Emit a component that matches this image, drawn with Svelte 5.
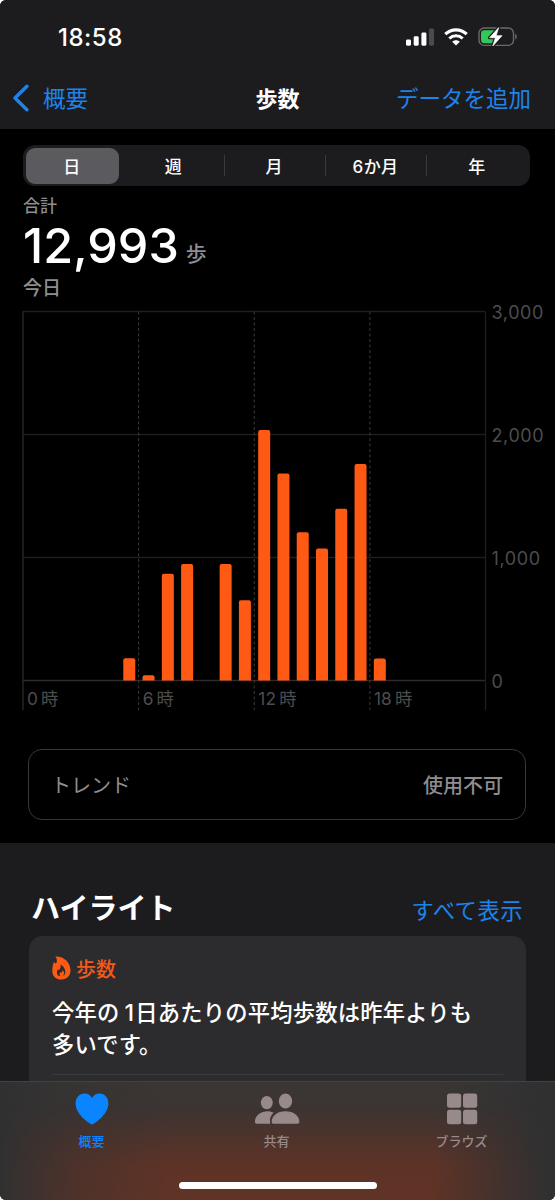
<script>
    const ranges = ['日', '週', '月', '6か月', '年'];
    let selected = $state('日');
    let activeTab = $state('概要');

    const steps = [
        { hour: 5, count: 180 },
        { hour: 6, count: 42 },
        { hour: 7, count: 868 },
        { hour: 8, count: 948 },
        { hour: 10, count: 948 },
        { hour: 11, count: 652 },
        { hour: 12, count: 2036 },
        { hour: 13, count: 1682 },
        { hour: 14, count: 1206 },
        { hour: 15, count: 1074 },
        { hour: 16, count: 1396 },
        { hour: 17, count: 1760 },
        { hour: 18, count: 178 }
    ];

    const left = 23;
    const right = 485.5;
    const top = 11.5;
    const bottom = 380.5;
    const barWidth = 12;
    const slot = (right - left) / 24;

    const x = (hour) => left + hour * slot;
    const y = (count) => bottom - (count / 3000) * (bottom - top);

    // 上だけ角丸の棒
    function bar({ hour, count }) {
        const x0 = x(hour) + (slot - barWidth) / 2 + 0.3;
        const y0 = y(count);
        const r = 2;
        return `M${x0} ${bottom}V${y0 + r}q0 ${-r} ${r} ${-r}h${barWidth - 2 * r}q${r} 0 ${r} ${r}V${bottom}z`;
    }
</script>

<div class="screen">
    <header>
        <div class="status">
            <span class="time">18:58</span>
            <div class="status-icons">
                <svg width="28" height="18" viewBox="0 0 28 18">
                    <rect x="0" y="11.5" width="5" height="6.2" rx="1.4" fill="#fff" />
                    <rect x="7.7" y="8.3" width="5" height="9.4" rx="1.4" fill="#fff" />
                    <rect x="15.4" y="4.4" width="5" height="13.3" rx="1.4" fill="#fff" />
                    <rect x="23" y="0.4" width="5" height="17.3" rx="1.4" fill="#4b4b4d" />
                </svg>
                <svg class="wifi" width="24" height="18" viewBox="0 0 24 18">
                    <path d="M1.3 6.2C7.4.4 16.6.4 22.7 6.2" fill="none" stroke="#fff" stroke-width="3.2" />
                    <path d="M5.3 10.5c3.8-3.6 9.6-3.6 13.4 0" fill="none" stroke="#fff" stroke-width="3" />
                    <path d="M8.2 13.8c2.2-2 5.4-2 7.6 0L12 17.6z" fill="#fff" />
                </svg>
                <svg class="battery" width="40" height="20" viewBox="0 0 40 20">
                    <rect x="1" y="1" width="34.5" height="17.4" rx="5.2" fill="none" stroke="#69696c" stroke-width="1.4" />
                    <path d="M37.2 6.8c2.2.9 2.2 5 0 5.8z" fill="#69696c" />
                    <path d="M6.4 3.2H18V16.2H6.4a3.4 3.4 0 0 1-3.4-3.4V6.6a3.4 3.4 0 0 1 3.4-3.4z" fill="#34c759" />
                    <path d="M20.7.6 11.6 10.7h5.8L14.8 19 24 8.7h-5.9z" fill="#fff" stroke="#1c1c1e" stroke-width="3.2" stroke-linejoin="round" />
                    <path d="M20.7.6 11.6 10.7h5.8L14.8 19 24 8.7h-5.9z" fill="#fff" stroke="#fff" stroke-width=".7" stroke-linejoin="round" />
                </svg>
            </div>
        </div>
        <nav class="navbar">
            <button class="back">
                <svg width="17" height="28" viewBox="0 0 17 28">
                    <path d="M14.9 2.2 3 14l11.9 11.8" fill="none" stroke="currentColor" stroke-width="3.4" stroke-linecap="round" stroke-linejoin="round" />
                </svg>
                <span>概要</span>
            </button>
            <h1>歩数</h1>
            <button class="add">データを追加</button>
        </nav>
    </header>

    <main>
        <div class="segments">
            {#each ranges as range}
                <button class:selected={selected === range} onclick={() => (selected = range)}>{range}</button>
            {/each}
        </div>

        <div class="summary">
            <div class="label">合計</div>
            <div class="total"><strong>12,993</strong><span>歩</span></div>
            <div class="date">今日</div>
        </div>

        <svg class="chart" width="555" height="420" viewBox="0 0 555 420">
            {#each [0, 1000, 2000, 3000] as tick}
                <line x1={left} x2={right} y1={y(tick)} y2={y(tick)} class:base={tick === 0} />
                <text x="491.5" y={y(tick) + 7} class="tick">{tick.toLocaleString('en-US')}</text>
            {/each}
            <line class="base" x1={left} x2={left} y1={top} y2="410" />
            <line x1={right} x2={right} y1={top} y2="410" />
            {#each [6, 12, 18] as hour}
                <line class="dashed" x1={x(hour)} x2={x(hour)} y1={top} y2="410" />
            {/each}
            {#each [0, 6, 12, 18] as hour}
                <text x={x(hour) + 4} y="405" class="hour">{hour}<tspan dx="3">時</tspan></text>
            {/each}
            {#each steps as step}
                <path d={bar(step)} fill="#ff5a14" />
            {/each}
        </svg>

        <div class="trend">
            <span>トレンド</span>
            <b>使用不可</b>
        </div>
    </main>

    <section>
        <div class="section-head">
            <h2>ハイライト</h2>
            <button>すべて表示</button>
        </div>
        <article>
            <div class="category">
                <svg width="19" height="24" viewBox="0 0 19 24">
                    <path fill-rule="evenodd" d="M3.3.4C12 0 18.6 6.4 18.5 14.5 18.4 20 14.8 23.5 9.5 23.5 4 23.5.3 20.2.3 15.2.3 12 .8 8.8 1.8 6.2c.9.3 1.5.8 1.9 1.6C5.6 5.6 5.3 2.8 3.3.4zM8.6 8.6c.5 2.8-.5 4.2-1.6 5.8-.4-.5-.7-.9-.9-1.5C4 16.2 4.700 20 8.400 20c-1.200-1.200-1-2.800 0-4.100l.9 1c.9-.9 1.200-1.700 1.100-2.800 2.300 1.900 2.300 4.300.4 5.900 4.200-1.300 3.300-8.300-2.200-11.400z" fill="#ff5a14" />
                </svg>
                <span>歩数</span>
            </div>
            <p>今年の<span class="num">1</span>日あたりの平均歩数は昨年よりも<br />多いです。</p>
            <hr />
        </article>
    </section>

    <footer>
        <div class="tabs">
            <button class:active={activeTab === '概要'} onclick={() => (activeTab = '概要')}>
                <svg width="34" height="32" viewBox="0 0 34 32">
                    <path d="M17 31.5C15.5 31.5.6 21.8.6 10.500.6 4.500 4.600.6 9.300.6c3.400 0 6.100 1.500 7.700 4.300C18.600 2.100 21.300.6 24.700.6c4.700 0 8.700 3.900 8.700 9.900C33.400 21.800 18.500 31.500 17 31.500z" fill="currentColor" />
                </svg>
                <span>概要</span>
            </button>
            <button class:active={activeTab === '共有'} onclick={() => (activeTab = '共有')}>
                <svg width="46" height="32" viewBox="0 0 46 32">
                    <ellipse cx="12.8" cy="9.6" rx="6" ry="6.6" fill="currentColor" />
                    <path d="M19.8 19.8C13 15.800 1.200 19.500.9 28.600c0 1.500.8 2.200 2 2.200h13.500C15.300 26.500 16.500 22.500 19.800 19.800z" fill="currentColor" />
                    <ellipse cx="31.5" cy="8" rx="6.7" ry="7.5" fill="currentColor" />
                    <path d="M31.500 18.200c-8.500 0-13.800 5-13.800 10.200 0 1.700.7 2.400 2.200 2.400h23.200c1.500 0 2.200-.7 2.200-2.400 0-5.200-5.300-10.200-13.800-10.200z" fill="currentColor" />
                </svg>
                <span>共有</span>
            </button>
            <button class:active={activeTab === 'ブラウズ'} onclick={() => (activeTab = 'ブラウズ')}>
                <svg width="32" height="32" viewBox="0 0 32 32">
                    <rect x="1" y="0.4" width="14.2" height="14.4" rx="2.5" fill="currentColor" />
                    <rect x="17" y="0.4" width="14.2" height="14.4" rx="2.5" fill="currentColor" />
                    <rect x="1" y="16.8" width="14.2" height="14.4" rx="2.5" fill="currentColor" />
                    <rect x="17" y="16.8" width="14.2" height="14.4" rx="2.5" fill="currentColor" />
                </svg>
                <span>ブラウズ</span>
            </button>
        </div>
        <div class="home-bar"></div>
    </footer>
</div>

<style>
    :global(body) {
        background: #fff;
    }

    .screen {
        position: relative;
        width: 555px;
        height: 1200px;
        overflow: hidden;
        border-radius: 6px;
        background: #1c1c1e;
        color: #fff;
        font-family: Inter, 'Noto Sans CJK JP', sans-serif;
    }

    button {
        padding: 0;
        border: 0;
        background: none;
        color: #1d84ec;
        font: inherit;
    }

    header {
        height: 129px;
        background: #1c1c1e;
    }

    .status {
        display: flex;
        justify-content: space-between;
        align-items: center;
        height: 74px;
        padding: 0 37px 0 58px;
    }

    .time {
        font-size: 24px;
        font-weight: 550;
        letter-spacing: 0.5px;
    }

    .status-icons {
        display: flex;
        align-items: center;
    }

    .wifi,
    .battery {
        margin-left: 10px;
    }

    .navbar {
        display: grid;
        grid-template-columns: 1fr auto 1fr;
        align-items: center;
        height: 48px;
        padding: 0 24px 0 12px;
        font-size: 22.5px;
    }

    .navbar span,
    .navbar h1,
    .add {
        position: relative;
        top: -1px;
    }

    .back {
        display: flex;
        align-items: center;
        gap: 14px;
    }

    .add {
        justify-self: end;
    }

    h1 {
        margin: 0 0 0 12px;
        font-size: 22px;
        font-weight: 700;
    }

    main {
        height: 714px;
        background: #000;
        overflow: hidden;
    }

    .segments {
        display: flex;
        height: 41px;
        margin: 16px 25px 0 23px;
        padding: 2.5px;
        box-sizing: border-box;
        border-radius: 12px;
        background: #1c1c1e;
    }

    .segments button {
        display: flex;
        flex: 1;
        align-items: center;
        justify-content: center;
        padding-bottom: 1px;
        border-radius: 9px;
        color: #fff;
        font-size: 17px;
        font-weight: 500;
        letter-spacing: 0.4px;
    }

    .segments .selected {
        flex: 0 0 93px;
        margin-right: 5px;
        background: #5b5a5f;
    }

    .segments button:nth-child(n + 3) {
        flex: 0 0 101.3px;
    }

    .segments button:nth-child(n + 3)::before {
        content: '';
        width: 1px;
        height: 21px;
        margin-right: auto;
        background: #3a3a3d;
    }

    .segments button:nth-child(n + 3)::after {
        content: '';
        width: 1px;
        margin-left: auto;
    }

    .summary {
        height: 114px;
        padding-left: 23px;
        color: #8d8d92;
        font-weight: 500;
    }

    .label {
        height: 39px;
        font-size: 17px;
        line-height: 40px;
    }

    .total {
        display: flex;
        align-items: baseline;
        height: 42px;
        line-height: 42px;
    }

    .total strong {
        color: #fff;
        font-size: 48.5px;
        font-weight: 480;
    }

    .total span {
        position: relative;
        top: -2px;
        margin-left: 7px;
        font-size: 21px;
    }

    .date {
        font-size: 19px;
        line-height: 44px;
    }

    .chart {
        display: block;
    }

    .chart line {
        stroke: #1e1e20;
        stroke-width: 1.3;
    }

    .chart .base {
        stroke: #2b2b2d;
    }

    .chart .dashed {
        stroke: #3b3b3d;
        stroke-width: 1;
        stroke-dasharray: 3 2.5;
    }

    .chart text {
        fill: #4c4c4e;
        font-size: 18px;
        font-weight: 430;
    }

    .chart .tick {
        letter-spacing: 0.6px;
    }

    .chart .hour {
        font-size: 17.3px;
        letter-spacing: 0.2px;
    }

    .trend {
        display: flex;
        justify-content: space-between;
        align-items: center;
        box-sizing: border-box;
        height: 71px;
        margin: 29px 29px 0 28px;
        padding: 0 22px;
        border: 1.5px solid #38383a;
        border-radius: 14px;
        color: #8d8d92;
        font-size: 20px;
    }

    .trend b {
        font-weight: 500;
    }

    .section-head {
        display: flex;
        justify-content: space-between;
        align-items: center;
        height: 93px;
        padding: 33px 32px 0 31px;
        box-sizing: border-box;
    }

    .section-head button {
        margin-top: 5px;
        font-size: 22.3px;
        letter-spacing: 0.5px;
    }

    h2 {
        margin: 0;
        font-size: 29px;
        font-weight: 700;
    }

    article {
        height: 220px;
        margin: 0 29px;
        padding: 18px 23px 0;
        border-radius: 14px;
        background: #2c2c2e;
    }

    .category {
        display: flex;
        align-items: center;
        gap: 5px;
        height: 28px;
        color: #f4591b;
        font-size: 20px;
        font-weight: 500;
    }

    p {
        margin: 15px 0 0;
        font-size: 22.3px;
        font-weight: 500;
        line-height: 31px;
        letter-spacing: 0.2px;
        white-space: nowrap;
    }

    .num {
        margin: 0 1px 0 5px;
        font-size: 23px;
    }

    hr {
        height: 1px;
        margin: 14px 0 0;
        border: 0;
        background: #3a3a3c;
    }

    footer {
        position: absolute;
        right: 0;
        bottom: 0;
        left: 0;
        height: 119px;
        box-sizing: border-box;
        border-top: 1px solid #444142;
        background:
            linear-gradient(90deg, #303031 0%, rgba(48, 48, 49, 0.75) 5%, rgba(48, 48, 49, 0.35) 14%, rgba(48, 48, 49, 0) 30%, rgba(48, 48, 49, 0) 78%, rgba(48, 48, 49, 0.5) 88%, rgba(48, 48, 49, 0.9) 96%, #303031 100%),
            linear-gradient(180deg, #3a3635 0%, #3d3431 25%, #50332b 50%, #5e3327 72%, #603326 100%);
    }

    .tabs {
        display: flex;
        height: 84px;
        margin: 0 1px 0 -1px;
    }

    .tabs button {
        display: flex;
        flex: 1;
        flex-direction: column;
        align-items: center;
        padding-top: 11px;
        color: #98898a;
        font-size: 13px;
        font-weight: 500;
    }

    .tabs span {
        margin-top: 6px;
        line-height: 20px;
    }

    .tabs .active {
        color: #0a84ff;
    }

    .home-bar {
        width: 198px;
        height: 7px;
        margin: 16px auto 0;
        border-radius: 4px;
        background: #fff;
    }
</style>
